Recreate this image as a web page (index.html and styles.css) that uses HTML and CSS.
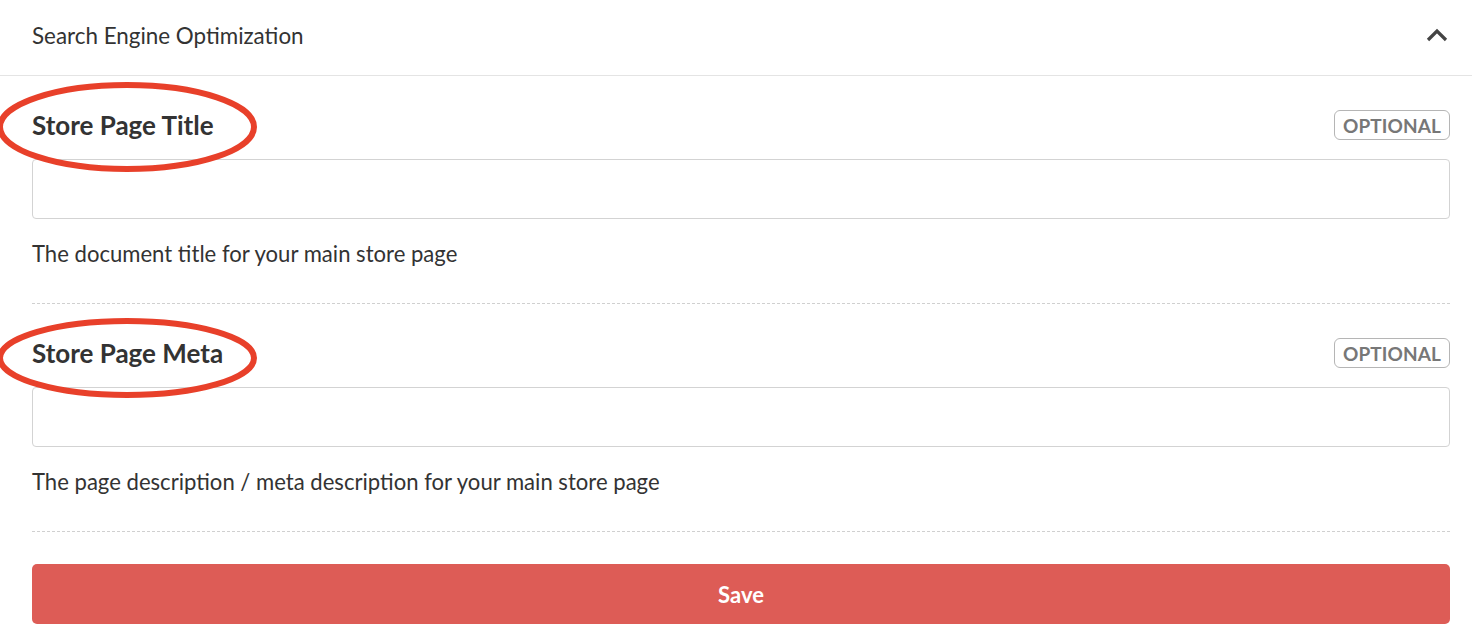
FILE: index.html
```html
<!DOCTYPE html>
<html>
<head>
<meta charset="utf-8">
<link rel="stylesheet" href="styles.css">
</head>
<body>
<div class="panel">
  <div class="panel-header">
    <span class="panel-title">Search Engine Optimization</span>
    <svg class="chevron" width="22" height="14" viewBox="0 0 22 14"><path d="M2 12 L11 3 L20 12" fill="none" stroke="#444" stroke-width="3.2"/></svg>
  </div>
  <div class="panel-body">
    <div class="field">
      <div class="field-row">
        <label class="field-label">Store Page Title</label>
        <span class="badge">OPTIONAL</span>
      </div>
      <input class="text-input" type="text">
      <p class="help">The document title for your main store page</p>
      <svg class="annot annot-1" width="264" height="94" viewBox="0 0 264 94"><ellipse cx="130" cy="47" rx="127" ry="42" fill="none" stroke="#e8402a" stroke-width="6"/></svg>
    </div>
    <div class="field">
      <div class="field-row">
        <label class="field-label">Store Page Meta</label>
        <span class="badge">OPTIONAL</span>
      </div>
      <input class="text-input" type="text">
      <p class="help">The page description / meta description for your main store page</p>
      <svg class="annot annot-2" width="264" height="84" viewBox="0 0 264 84"><ellipse cx="130" cy="42" rx="127" ry="37" fill="none" stroke="#e8402a" stroke-width="6"/></svg>
    </div>
    <button class="save-btn">Save</button>
  </div>
</div>
</body>
</html>
```
FILE: styles.css
```css
html, body {
  margin: 0;
  padding: 0;
  background: #fff;
}
body {
  font-family: Lato, "Liberation Sans", sans-serif;
  color: #333;
  width: 1472px;
  height: 632px;
  overflow: hidden;
}
.panel-header {
  height: 75px;
  border-bottom: 1px solid #e4e4e4;
  display: flex;
  align-items: center;
  justify-content: space-between;
  padding: 0 24px 0 32px;
  box-sizing: content-box;
}
.panel-title {
  font-size: 22.4px;
  color: #333;
  margin-top: -4px;
}
.chevron {
  margin-top: -6px;
}
.panel-body {
  padding: 0 22px 0 32px;
}
.field {
  position: relative;
  padding: 34px 0 37px;
  border-bottom: 1px dashed #d0d0d0;
}
.field-row {
  display: flex;
  justify-content: space-between;
  align-items: center;
  height: 30px;
}
.field-label {
  font-size: 26px;
  font-weight: 700;
  color: #333;
}
.badge {
  box-sizing: border-box;
  height: 30px;
  padding: 0 8px;
  border: 1px solid #b5b5b5;
  border-radius: 6px;
  font-size: 19px;
  font-weight: 700;
  color: #777;
  display: flex;
  align-items: center;
  letter-spacing: 0.1px;
}
.text-input {
  display: block;
  box-sizing: border-box;
  width: 100%;
  height: 60px;
  margin-top: 19px;
  border: 1px solid #d3d3d3;
  border-radius: 4px;
  background: #fff;
  font-family: inherit;
  font-size: 18px;
  padding: 0 12px;
  outline: none;
}
.help {
  margin: 22px 0 0;
  font-size: 22.1px;
  line-height: 25px;
  color: #333;
}
.annot {
  position: absolute;
  pointer-events: none;
}
.annot-1 {
  left: -35px;
  top: 4px;
}
.annot-2 {
  left: -35px;
  top: 12px;
}
.save-btn {
  display: block;
  width: 100%;
  height: 60px;
  margin-top: 32px;
  border: none;
  border-radius: 5px;
  background: #dd5c56;
  color: #fff;
  font-family: inherit;
  font-size: 22px;
  font-weight: 700;
}
```
